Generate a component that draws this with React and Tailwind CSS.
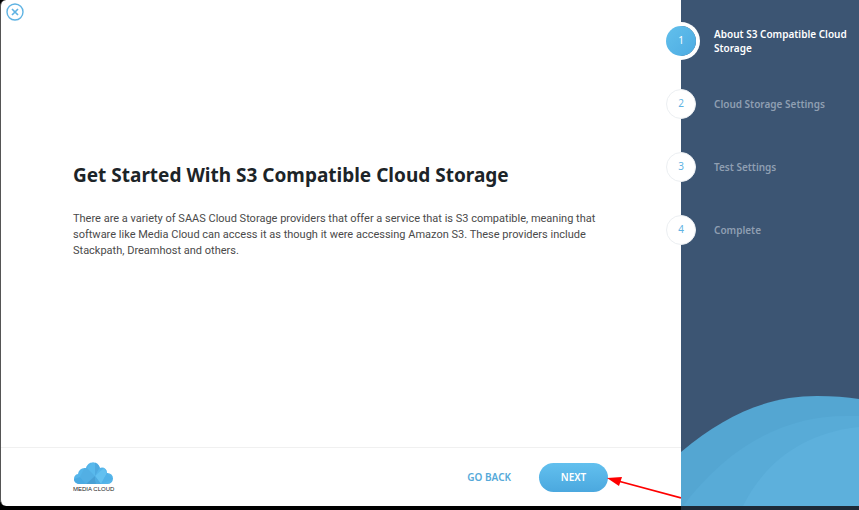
import React, { useState } from 'react';
import clsx from 'clsx';

const steps = [
  { id: 1, title: 'About S3 Compatible Cloud Storage' },
  { id: 2, title: 'Cloud Storage Settings' },
  { id: 3, title: 'Test Settings' },
  { id: 4, title: 'Complete' },
];

const CloseIcon = () => (
  <svg viewBox="0 0 18 18" className="w-[18px] h-[18px]" fill="none" stroke="#5fb3e3" aria-hidden="true">
    <circle cx="9" cy="9" r="8" strokeWidth="1.4" />
    <path d="M6 6l6 6M12 6l-6 6" strokeWidth="1.7" />
  </svg>
);

const CloudLogo = () => (
  <svg viewBox="0 0 39 22" className="w-[39px] h-[22px]" aria-hidden="true">
    <defs>
      <clipPath id="cloud">
        <circle cx="5" cy="17" r="5" />
        <circle cx="10.5" cy="12.5" r="6.5" />
        <circle cx="19" cy="7.5" r="7" />
        <circle cx="28" cy="10.5" r="5" />
        <circle cx="33.5" cy="16.5" r="5.5" />
        <rect x="5" y="12" width="28.5" height="10" />
      </clipPath>
    </defs>
    <g clipPath="url(#cloud)">
      <rect width="39" height="22" fill="#55b5ea" />
      <path d="M12 3L21 14L12 22L6 15Z" fill="#52afe4" />
      <path d="M19 0L26 5L21 14L13 6Z" fill="#58b9ec" />
      <path d="M21 14L30 6L33 11L27 22Z" fill="#62c0f0" />
      <path d="M21 14L22 22H12Z" fill="#479fd4" />
      <path d="M21 14L27 22H22Z" fill="#4daae0" />
      <path d="M0 17L6 15L12 22H0Z" fill="#4aaae2" />
      <path d="M33 11L39 17L27 22Z" fill="#50b1e8" />
      <path d="M21 0L21 14L26 5Z" fill="#4eaae0" />
    </g>
  </svg>
);

const Waves = () => (
  <svg viewBox="0 0 178 111" preserveAspectRatio="none" className="block w-full h-[111px]" aria-hidden="true">
    <path d="M0 57C45 19 88 1 136 1C152 1 166 2 178 4V111H0Z" fill="#54a6d2" />
    <path d="M2 111C48 50 104 21 165 21L178 21V111Z" fill="#58abd7" />
    <path d="M62 111C82 70 120 38 178 32V111Z" fill="#5db0dc" />
  </svg>
);

const Step = ({ step, active, onSelect }) => (
  <li>
    <button
      type="button"
      onClick={onSelect}
      aria-current={active ? 'step' : undefined}
      className="flex items-center gap-[18px] h-[63px] w-full text-left"
    >
      <span
        className={clsx(
          'flex items-center justify-center shrink-0 size-[30px] rounded-full text-[10px]',
          active
            ? 'bg-linear-to-br from-[#62c0ec] to-[#4dabe2] text-white ring-4 ring-white'
            : 'bg-white text-[#5fb3e3] border border-[#eceff2]'
        )}
      >
        {step.id}
      </span>
      <span
        className={clsx(
          'text-[10px] leading-[14px] font-semibold',
          active ? 'text-white' : 'text-[#8f9fb2]'
        )}
      >
        {step.title}
      </span>
    </button>
  </li>
);

const App = () => {
  const [current, setCurrent] = useState(1);

  return (
    <div className="min-h-screen flex flex-col bg-black font-['Noto_Sans',sans-serif]">
      <div className="grow flex">
        {/* content */}
        <main className="relative grow min-w-0 flex flex-col bg-white rounded-l-md border-l border-[#555555]">
          <button type="button" aria-label="Close" className="absolute left-[5px] top-[3px]">
            <CloseIcon />
          </button>

          <div className="grow flex flex-col justify-center px-[72px] pb-7">
            <h1 className="text-[19px] leading-7 font-bold text-[#1c2428]">
              Get Started With S3 Compatible Cloud Storage
            </h1>
            <p className="mt-[22px] text-[11px] leading-4 text-[#4a4a4a] font-['Roboto',sans-serif]">
              There are a variety of SAAS Cloud Storage providers that offer a service that is S3 compatible, meaning that
              software like Media Cloud can access it as though it were accessing Amazon S3. These providers include
              Stackpath, Dreamhost and others.
            </p>
          </div>

          <footer className="relative flex items-center justify-between h-[59px] pl-[72px] pr-[73px] border-t border-[#f0f0f0]">
            <div className="flex flex-col items-center gap-px">
              <CloudLogo />
              <span className="text-[6px] leading-2 text-[#222222] font-['Liberation_Sans',sans-serif]">MEDIA CLOUD</span>
            </div>
            <div className="flex items-center gap-7 text-[10px] font-semibold">
              <button type="button" onClick={() => setCurrent(Math.max(1, current - 1))} className="text-[#55a9d9]">
                GO BACK
              </button>
              <button
                type="button"
                onClick={() => setCurrent(Math.min(steps.length, current + 1))}
                className="w-[69px] h-[29px] rounded-full text-white bg-linear-to-b from-[#62c0ee] to-[#4ba8df]"
              >
                NEXT
              </button>
            </div>

            {/* pointer to the next button */}
            <svg viewBox="0 0 75 24" className="absolute right-0 top-[28px] w-[75px] h-6" aria-hidden="true">
              <path d="M12 5L75 22" stroke="#fe0000" strokeWidth="1.8" />
              <path d="M1 2L16 1L13 10Z" fill="#fe0000" />
            </svg>
          </footer>
        </main>

        {/* steps */}
        <aside className="w-[178px] shrink-0 flex flex-col justify-between bg-[#3c5573]">
          <ol className="relative -ml-[15px] pt-[9px] pr-2">
            {steps.map((step) => (
              <Step key={step.id} step={step} active={step.id === current} onSelect={() => setCurrent(step.id)} />
            ))}
          </ol>
          <Waves />
        </aside>
      </div>

      <div className="h-1 flex justify-end">
        <div className="w-[178px] bg-[#1d2a38]" />
      </div>
    </div>
  );
};

export default App;
